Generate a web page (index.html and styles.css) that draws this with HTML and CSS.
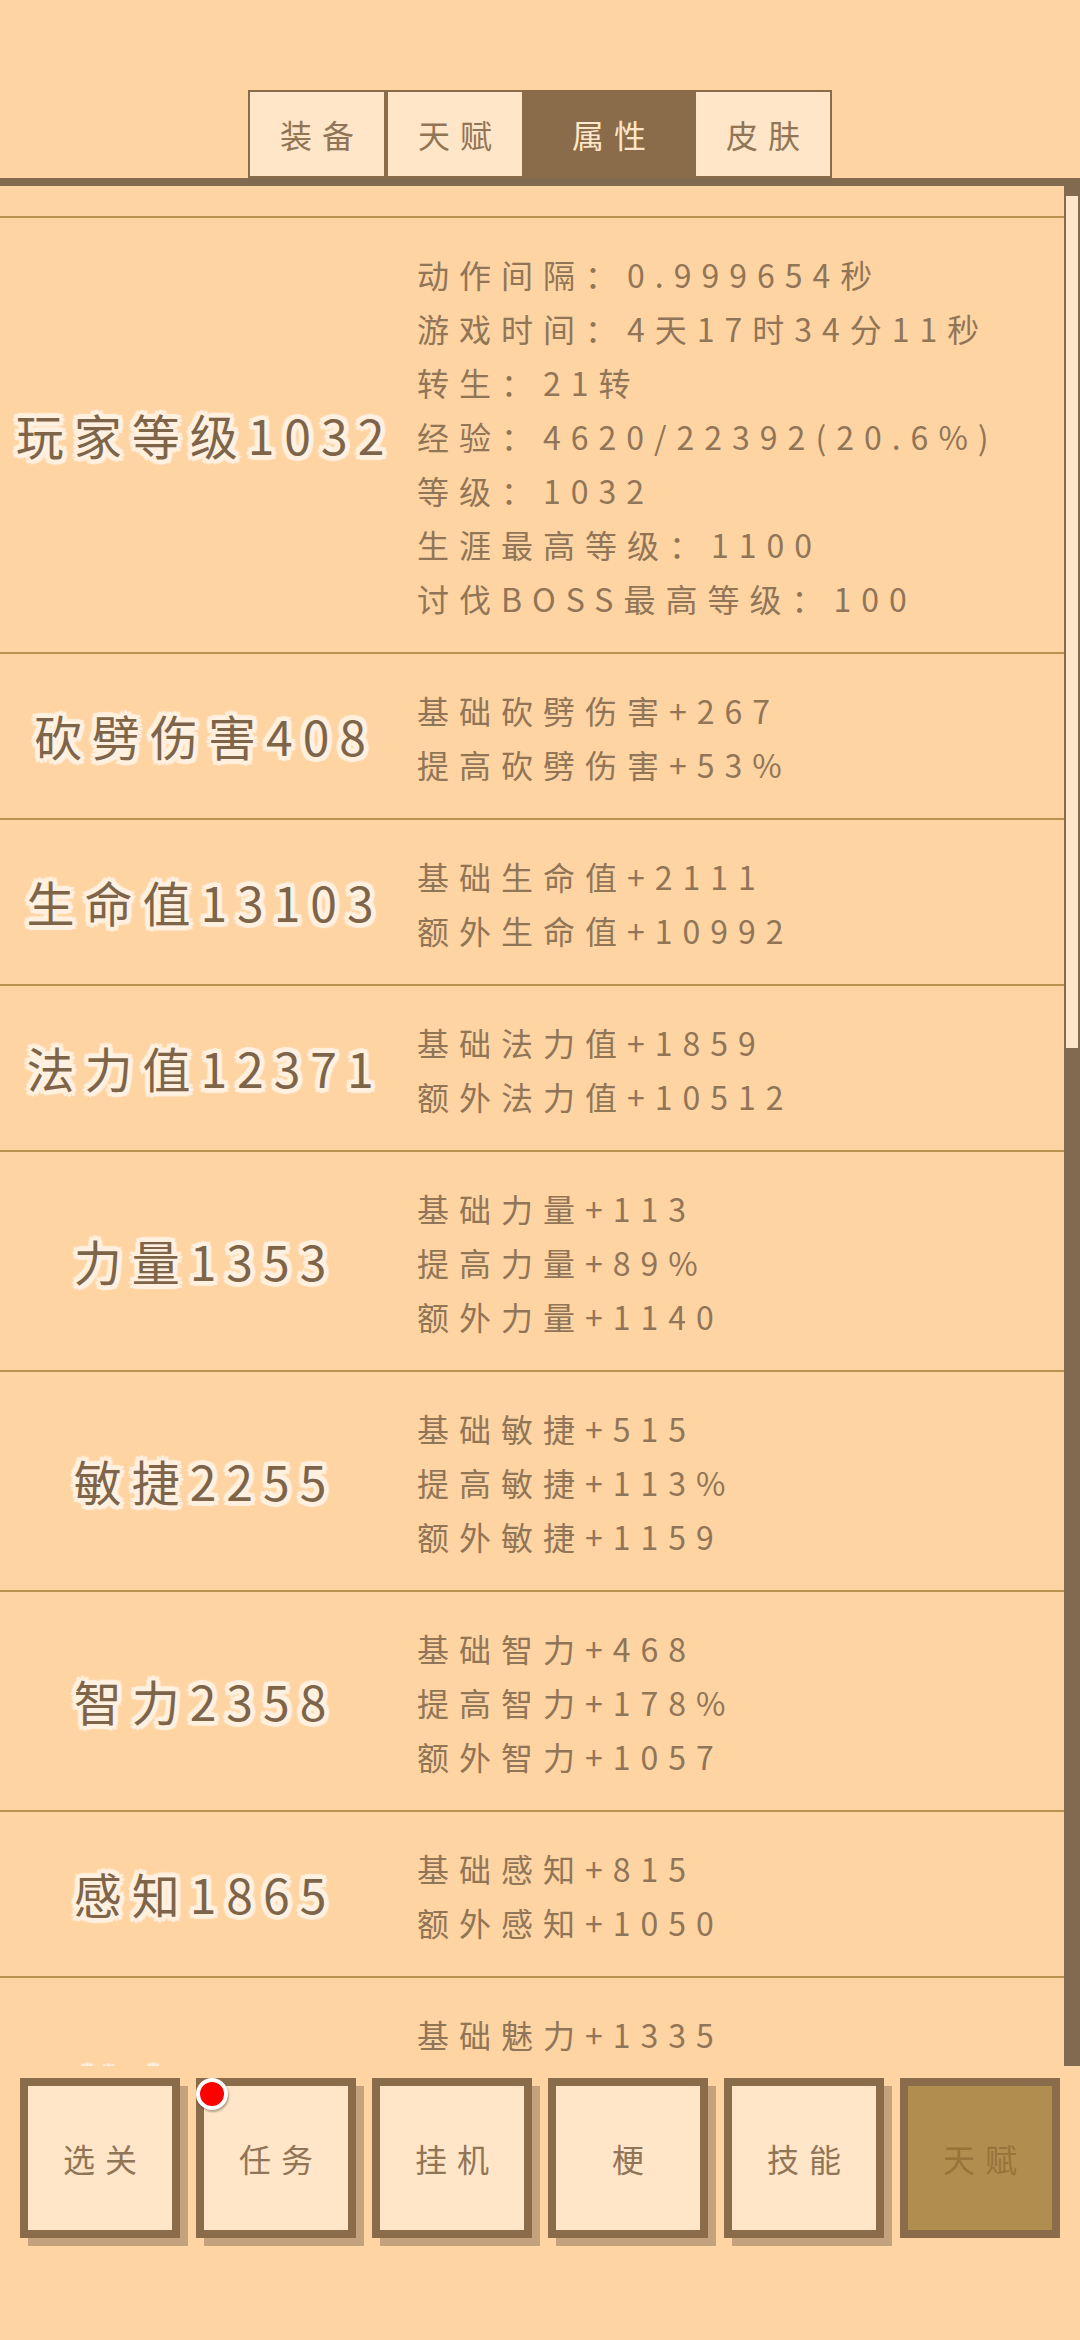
FILE: index.html
```html
<!DOCTYPE html>
<html lang="zh-CN">
<head>
    <meta charset="UTF-8">
    <meta name="viewport" content="width=device-width, initial-scale=1.0">
    <title>属性</title>
    <link rel="stylesheet" href="styles.css">
</head>
<body>
<div class="tabs">
    <div class="tab">装备</div>
    <div class="tab">天赋</div>
    <div class="tab active">属性</div>
    <div class="tab">皮肤</div>
</div>

<div class="panel">
    <div class="list">
        <div class="row">
            <div class="name">玩家等级1032</div>
            <div class="lines">
                <div>动作间隔：0.999654秒</div>
                <div>游戏时间：4天17时34分11秒</div>
                <div>转生：21转</div>
                <div>经验：4620/22392(20.6%)</div>
                <div>等级：1032</div>
                <div>生涯最高等级：1100</div>
                <div>讨伐BOSS最高等级：100</div>
            </div>
        </div>
        <div class="row">
            <div class="name">砍劈伤害408</div>
            <div class="lines">
                <div>基础砍劈伤害+267</div>
                <div>提高砍劈伤害+53%</div>
            </div>
        </div>
        <div class="row">
            <div class="name">生命值13103</div>
            <div class="lines">
                <div>基础生命值+2111</div>
                <div>额外生命值+10992</div>
            </div>
        </div>
        <div class="row">
            <div class="name">法力值12371</div>
            <div class="lines">
                <div>基础法力值+1859</div>
                <div>额外法力值+10512</div>
            </div>
        </div>
        <div class="row">
            <div class="name">力量1353</div>
            <div class="lines">
                <div>基础力量+113</div>
                <div>提高力量+89%</div>
                <div>额外力量+1140</div>
            </div>
        </div>
        <div class="row">
            <div class="name">敏捷2255</div>
            <div class="lines">
                <div>基础敏捷+515</div>
                <div>提高敏捷+113%</div>
                <div>额外敏捷+1159</div>
            </div>
        </div>
        <div class="row">
            <div class="name">智力2358</div>
            <div class="lines">
                <div>基础智力+468</div>
                <div>提高智力+178%</div>
                <div>额外智力+1057</div>
            </div>
        </div>
        <div class="row">
            <div class="name">感知1865</div>
            <div class="lines">
                <div>基础感知+815</div>
                <div>额外感知+1050</div>
            </div>
        </div>
        <div class="row row-cut">
            <div class="name">魅力1335</div>
            <div class="lines">
                <div>基础魅力+1335</div>
            </div>
        </div>
    </div>
    <div class="scrollbar">
        <div class="thumb"></div>
    </div>
</div>

<div class="nav">
    <div class="nav-btn">选关</div>
    <div class="nav-btn">任务<span class="dot"></span></div>
    <div class="nav-btn">挂机</div>
    <div class="nav-btn">梗</div>
    <div class="nav-btn">技能</div>
    <div class="nav-btn disabled">天赋</div>
</div>
</body>
</html>
```

FILE: styles.css
```css
html, body {
    height: 100%;
}
body {
    margin: 0;
    overflow: hidden;
    background-color: #ffd4a3;
    color: #917557;
    font-family: "Noto Sans CJK SC", "Noto Sans", sans-serif;
    font-size: 32px;
    letter-spacing: 10px;
}
.tabs {
    display: flex;
    justify-content: center;
    padding-top: 90px;
}
.tab {
    width: 138px;
    height: 88px;
    box-sizing: border-box;
    display: flex;
    align-items: center;
    justify-content: center;
    text-indent: 10px;
    border: 2px solid #8a6c4a;
    background-color: #ffe6c8;
}
.tab.active {
    width: 170px;
    background-color: #8a6c4a;
    color: #ffe6c8;
}
.panel {
    display: flex;
    height: 1888px;
    box-sizing: border-box;
    border-top: 8px solid #826a50;
    overflow: hidden;
}
.list {
    flex: 1;
    min-width: 0;
    padding-top: 30px;
    overflow: hidden;
}
.row {
    display: flex;
    align-items: center;
    padding: 29px 0 27px;
    border-top: 2px solid #b8924f;
}
.row-cut {
    min-height: 164px;
}
.name {
    width: 404px;
    flex: none;
    margin-right: 13px;
    padding-bottom: 5px;
    text-align: center;
    text-indent: 6px;
    font-size: 48px;
    color: #7e6549;
    text-shadow: 5px 0 1px #fff0e0, -5px 0 1px #fff0e0, 0 5px 1px #fff0e0, 0 -5px 1px #fff0e0,
        4px 4px 1px #fff0e0, -4px 4px 1px #fff0e0, 4px -4px 1px #fff0e0, -4px -4px 1px #fff0e0,
        3px 0 0 #fff0e0, -3px 0 0 #fff0e0, 0 3px 0 #fff0e0, 0 -3px 0 #fff0e0,
        2px 2px 0 #fff0e0, -2px 2px 0 #fff0e0, 2px -2px 0 #fff0e0, -2px -2px 0 #fff0e0;
}
.lines {
    align-self: flex-start;
    line-height: 54px;
    white-space: nowrap;
}
.scrollbar {
    width: 16px;
    flex: none;
    box-sizing: border-box;
    padding: 10px 2px 0;
    background-color: #826a50;
}
.thumb {
    height: 852px;
    background-color: #ffe6c8;
}
.nav {
    display: flex;
    gap: 16px;
    padding: 12px 0 0 20px;
}
.nav-btn {
    position: relative;
    width: 160px;
    height: 160px;
    box-sizing: border-box;
    display: flex;
    align-items: center;
    justify-content: center;
    text-indent: 10px;
    border: 8px solid #8a6c4a;
    background-color: #ffe6c8;
    box-shadow: 8px 8px 0 #c4a27e;
}
.nav-btn.disabled {
    background-color: #b08e50;
    color: #96743a;
    box-shadow: none;
}
.dot {
    position: absolute;
    left: -8px;
    top: -8px;
    width: 32px;
    height: 32px;
    box-sizing: border-box;
    border: 4px solid #fff;
    border-radius: 50%;
    background-color: #f00;
    box-shadow: 1px 2px 2px rgba(0, 0, 0, 0.3);
}
```
